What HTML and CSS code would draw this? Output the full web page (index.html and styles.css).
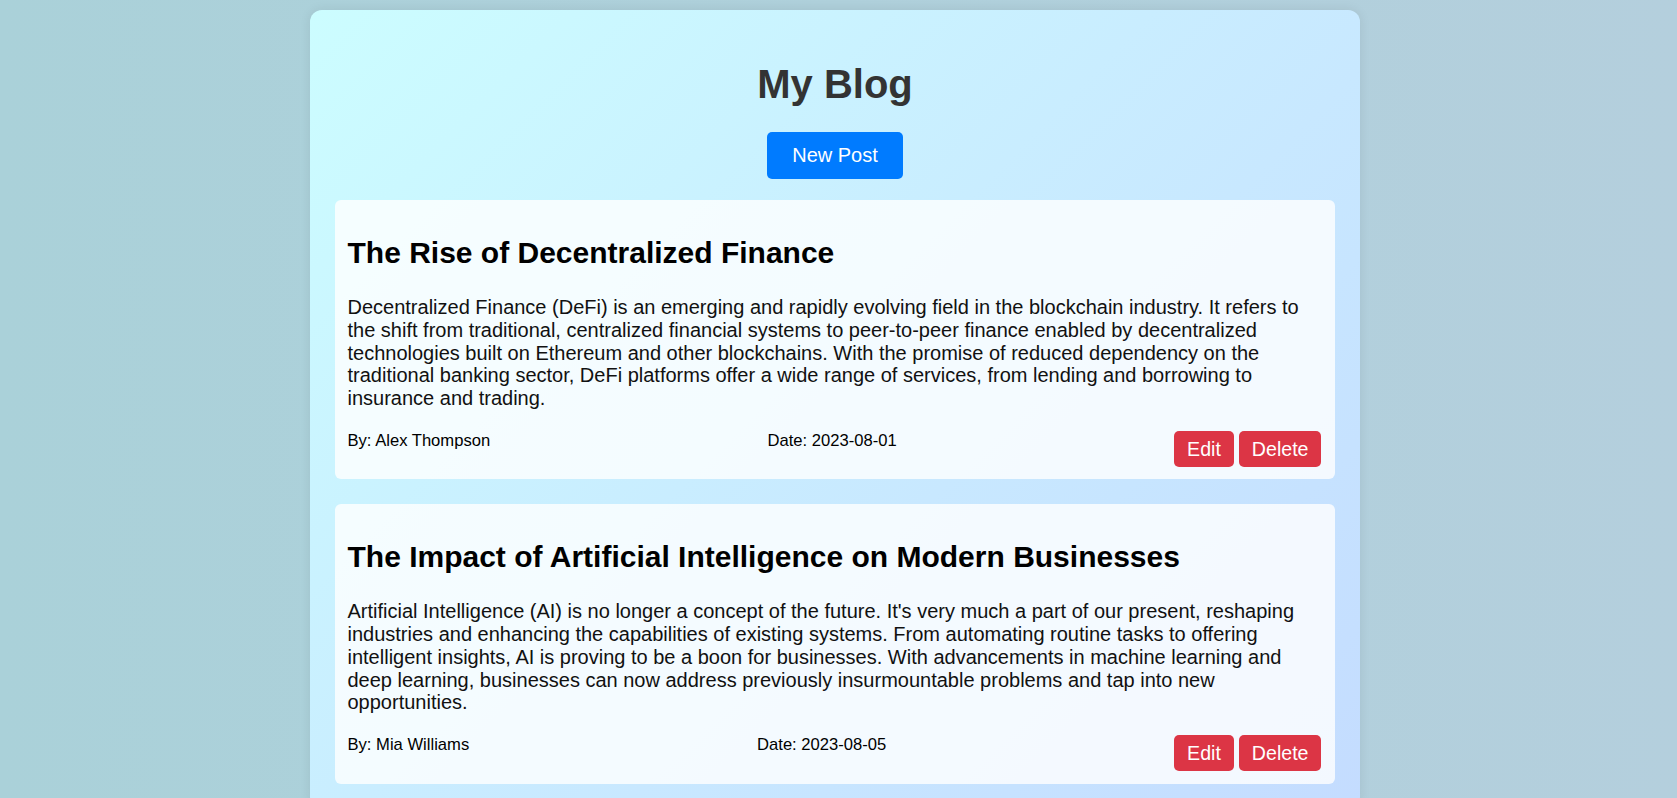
FILE: index.html
```html
<!DOCTYPE html>
<html lang="en">
<head>
<meta charset="utf-8">
<title>My Blog</title>
<link rel="stylesheet" href="styles.css">
</head>
<body>
<div class="container">
  <header class="header">
    <h1 class="title">My Blog</h1>
    <button class="btn-new">New Post</button>
  </header>
  <main class="posts">
    <article class="post">
      <h2 class="post-title">The Rise of Decentralized Finance</h2>
      <p class="post-body">Decentralized Finance (DeFi) is an emerging and rapidly evolving field in the blockchain industry. It refers to the shift from traditional, centralized financial systems to peer-to-peer finance enabled by decentralized technologies built on Ethereum and other blockchains. With the promise of reduced dependency on the traditional banking sector, DeFi platforms offer a wide range of services, from lending and borrowing to insurance and trading.</p>
      <div class="post-meta">
        <span class="meta-text">By: Alex Thompson</span>
        <span class="meta-text">Date: 2023-08-01</span>
        <div class="actions">
          <button class="btn-red">Edit</button>
          <button class="btn-red">Delete</button>
        </div>
      </div>
    </article>
    <article class="post">
      <h2 class="post-title">The Impact of Artificial Intelligence on Modern Businesses</h2>
      <p class="post-body">Artificial Intelligence (AI) is no longer a concept of the future. It's very much a part of our present, reshaping industries and enhancing the capabilities of existing systems. From automating routine tasks to offering intelligent insights, AI is proving to be a boon for businesses. With advancements in machine learning and deep learning, businesses can now address previously insurmountable problems and tap into new opportunities.</p>
      <div class="post-meta">
        <span class="meta-text">By: Mia Williams</span>
        <span class="meta-text">Date: 2023-08-05</span>
        <div class="actions">
          <button class="btn-red">Edit</button>
          <button class="btn-red">Delete</button>
        </div>
      </div>
    </article>
  </main>
</div>
</body>
</html>
```
FILE: styles.css
```css
html, body {
  margin: 0;
}
body {
  padding: 10px 7px 0 0;
  min-height: 798px;
  box-sizing: border-box;
  font-family: "Liberation Sans", Arial, sans-serif;
  background: linear-gradient(to right, #aad1d9, #b4cfdd);
}
.container {
  width: 1000px;
  margin: 0 auto;
  padding: 25px;
  border-radius: 12px;
  background: linear-gradient(135deg, #ccfdff 0%, #c8e8ff 60%, #c4dcff 100%);
  box-shadow: 0 0 12px rgba(0, 0, 0, 0.08);
}
.header {
  display: flex;
  flex-direction: column;
  align-items: center;
  margin-bottom: 21px;
}
.title {
  font-size: 40px;
  line-height: 46px;
  font-weight: bold;
  color: #333;
  margin: 26px 0 25px;
}
.btn-new {
  font-family: inherit;
  font-size: 20px;
  color: #fff;
  background: #007bff;
  border: none;
  border-radius: 5px;
  padding: 12px 25px;
  line-height: 23px;
}
.posts {
  display: flex;
  flex-direction: column;
  gap: 25px;
}
.post {
  padding: 12.5px 13.5px 12.5px 12.5px;
  border-radius: 6px;
  background: rgba(255, 255, 255, 0.8);
}
.post-title {
  font-size: 30px;
  line-height: 34.5px;
  font-weight: bold;
  color: #000;
  margin: 23px 0 26px;
}
.post-body {
  font-size: 20px;
  line-height: 22.75px;
  color: #111;
  margin: 0 0 21px;
}
.post-meta {
  display: flex;
  justify-content: space-between;
  align-items: flex-start;
}
.meta-text {
  font-size: 16.6px;
  color: #000;
}
.actions {
  display: flex;
  gap: 5px;
}
.btn-red {
  font-family: inherit;
  font-size: 19.6px;
  line-height: 22px;
  color: #fff;
  background: #dc3545;
  border: none;
  border-radius: 5px;
  padding: 7px 13px;
}
```
